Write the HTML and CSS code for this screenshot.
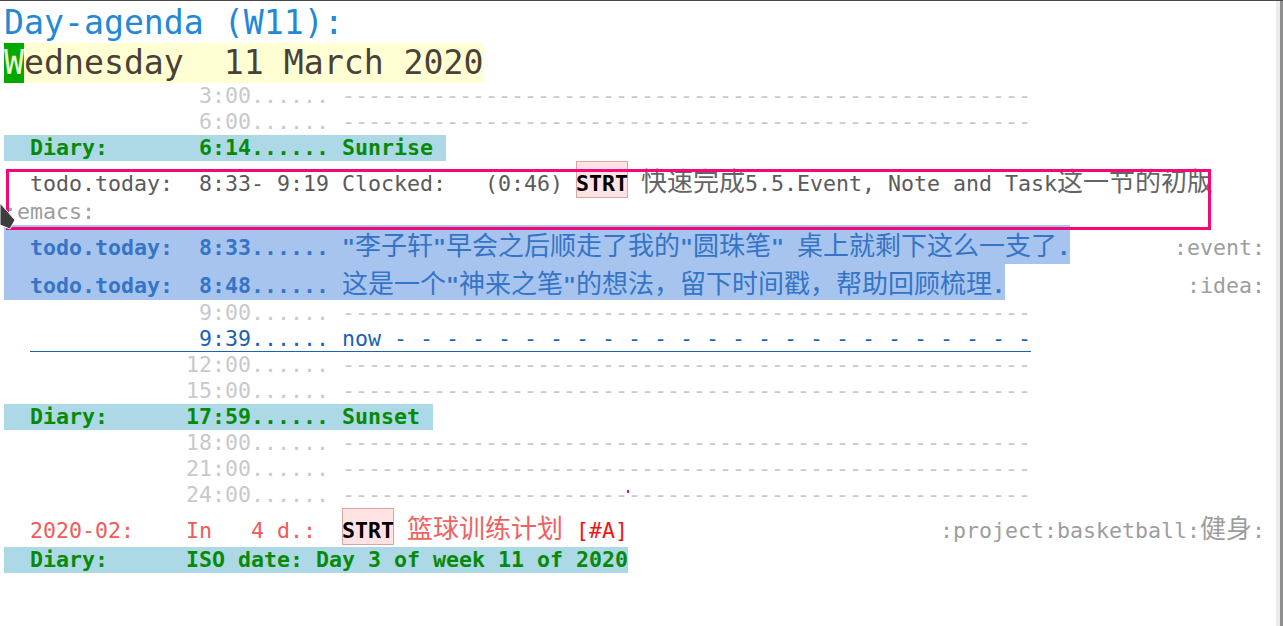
FILE: index.html
```html
<!DOCTYPE html>
<html>
<head>
<meta charset="utf-8">
<title>Day-agenda</title>
<link rel="stylesheet" href="styles.css">
</head>
<body>
<div class="frame">
  <div class="buf">
    <div class="title">Day-agenda (W11):</div>
    <div class="daterow"><span class="datebg"><span class="cursor">W</span>ednesday  11 March 2020</span></div>
    <div class="row grid">               3:00...... -----------------------------------------------------</div>
    <div class="row grid">               6:00...... -----------------------------------------------------</div>
    <div class="row"><span class="diary">  Diary:       6:14...... Sunrise </span></div>
    <div class="clock">  todo.today:  8:33- 9:19 Clocked:   (0:46) <span class="kw">STRT</span> <span class="cj">快速完成</span>5.5.Event, Note and Task<span class="cj">这一节的初版</span></div>
    <div class="row tagc">:emacs:</div>
    <div class="hlrow h39"><div class="hl p10">  todo.today:  8:33...... "<span class="cj">李子轩</span>"<span class="cj">早会之后顺走了我的</span>"<span class="cj">圆珠笔</span>" <span class="cj">桌上就剩下这么一支了</span>.</div><div class="tag p10">:event:</div></div>
    <div class="hlrow h36"><div class="hl p9">  todo.today:  8:48...... <span class="cj">这是一个</span>"<span class="cj">神来之笔</span>"<span class="cj">的想法，留下时间戳，帮助回顾梳理</span>.</div><div class="tag p9">:idea:</div></div>
    <div class="row grid">               9:00...... -----------------------------------------------------</div>
    <div class="row nowrow">  <span class="nowline">             9:39...... now - - - - - - - - - - - - - - - - - - - - - - - - -</span></div>
    <div class="row grid">              12:00...... -----------------------------------------------------</div>
    <div class="row grid">              15:00...... -----------------------------------------------------</div>
    <div class="row"><span class="diary">  Diary:      17:59...... Sunset </span></div>
    <div class="row grid">              18:00...... -----------------------------------------------------</div>
    <div class="row grid">              21:00...... -----------------------------------------------------</div>
    <div class="row grid">              24:00...... -----------------------------------------------------</div>
    <div class="hlrow h39"><div class="due p10">  2020-02:    In   4 d.:  <span class="kw">STRT</span> <span class="cj">篮球训练计划</span> <span class="pri">[#A]</span></div><div class="tag p10">:project:basketball:<span class="cj">健身</span>:</div></div>
    <div class="row"><span class="diary">  Diary:      ISO date: Day 3 of week 11 of 2020</span></div>
  </div>
  <div class="scroll"></div>
</div>
<div class="annot"></div>
<div class="dot"></div>
<svg class="arrow" width="20" height="32" viewBox="0 0 20 32"><polygon points="0,0 15,17 10,26 0,22" fill="#3d3d3d" stroke="#ffffff" stroke-width="1"/></svg>
</body>
</html>
```

FILE: styles.css
```css
html, body {
  margin: 0;
  padding: 0;
}
body {
  position: relative;
  width: 1283px;
  height: 626px;
  overflow: hidden;
  background: #ffffff;
  font-family: "DejaVu Sans Mono", "Liberation Mono", monospace;
  font-size: 21.6px;
}
.frame {
  display: flex;
  height: 626px;
  box-sizing: border-box;
  border-top: 1px solid #474a4d;
}
.buf {
  flex: 1;
  min-width: 0;
  padding-left: 4px;
}
.scroll {
  width: 4px;
  background: #ececef;
  border-right: 3px solid #8f8f8f;
}
.title {
  height: 42px;
  line-height: 43px;
  font-size: 33.2px;
  color: #2389d7;
  white-space: pre;
}
.daterow {
  height: 40px;
  display: flex;
}
.datebg {
  font-size: 33.2px;
  line-height: 40px;
  background: #ffffd3;
  color: #4a4037;
  white-space: pre;
}
.cursor {
  display: inline-block;
  background: #00a800;
  color: #f3f6c8;
}
.row {
  white-space: pre;
  height: 26px;
  line-height: 26px;
}
.grid {
  color: #c9c9c9;
}
.diary {
  display: inline-block;
  background: #add8e6;
  color: #078a07;
  font-weight: bold;
}
.cj {
  font-family: "Noto Sans CJK SC", sans-serif;
  font-size: 26px;
  line-height: 0;
  font-weight: normal;
}
.clock {
  height: 38px;
  box-sizing: border-box;
  padding-top: 10px;
  line-height: 26px;
  white-space: pre;
  color: #5a5a5a;
}
.clock .cj {
  color: #646464;
}
.kw {
  font-weight: bold;
  color: #000000;
  background: #ffe3e3;
  box-shadow: inset 0 0 0 1px #dba5a5;
  padding: 10px 0 2px;
}
.tagc {
  color: #9c9c9c;
}
.hlrow {
  display: flex;
  width: 1261px;
}
.h39 {
  height: 39px;
}
.h36 {
  height: 36px;
}
.p10 {
  padding-top: 10px;
}
.p9 {
  padding-top: 9px;
}
.hl {
  box-sizing: border-box;
  line-height: 26px;
  white-space: pre;
  background: #a7c4ee;
  color: #3574c6;
  font-weight: bold;
}
.tag {
  margin-left: auto;
  box-sizing: border-box;
  line-height: 26px;
  white-space: pre;
  color: #9d9d9d;
}
.nowrow {
  color: #1c62b5;
}
.nowline {
  border-bottom: 1px solid #1c62b5;
}
.due {
  box-sizing: border-box;
  line-height: 26px;
  white-space: pre;
  color: #f05a5a;
}
.due .cj {
  color: #f06262;
}
.pri {
  color: #f01414;
}
.annot {
  position: absolute;
  left: 6px;
  top: 169px;
  width: 1199px;
  height: 55px;
  border: 3px solid #f5077a;
}
.dot {
  position: absolute;
  left: 627px;
  top: 490px;
  width: 2px;
  height: 3px;
  background: #e8127a;
}
.arrow {
  position: absolute;
  left: 0;
  top: 203px;
}
```
